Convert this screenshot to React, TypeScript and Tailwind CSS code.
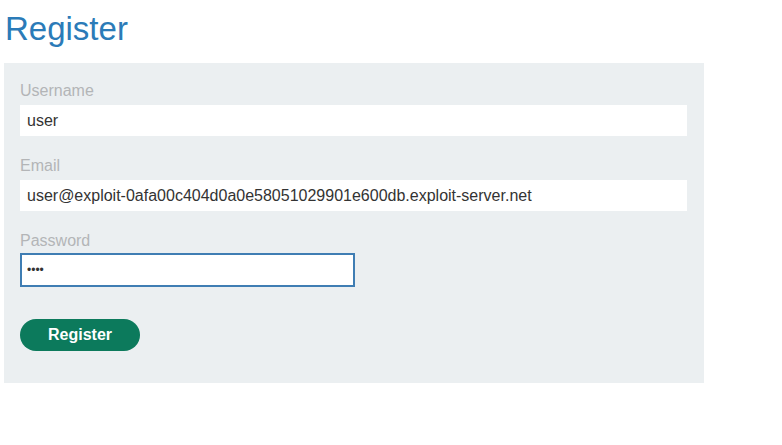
export default function App() {
  return (
    <div className="min-h-screen bg-white font-['Liberation_Sans',Arial,sans-serif]">
      <div className="w-[704px] pl-[4px]">
        <h1 className="pl-[1px] pt-[9px] text-[33px] leading-[40px] text-[#2b7bb8]">Register</h1>
        <form className="mt-[14px] flex flex-col bg-[#ebeff1] px-4 pb-[32px] pt-[18px]">
          <label className="text-[16px] leading-[20px] text-[#b3b5b7]">Username</label>
          <input
            className="mt-[4px] h-[31px] w-[667px] bg-white px-[7px] text-[16px] text-[#333] outline-none"
            defaultValue="user"
          />
          <label className="mt-[20px] text-[16px] leading-[20px] text-[#b3b5b7]">Email</label>
          <input
            className="mt-[4px] h-[31px] w-[667px] bg-white px-[7px] text-[16px] text-[#333] outline-none"
            defaultValue="user@exploit-0afa00c404d0a0e58051029901e600db.exploit-server.net"
          />
          <label className="mt-[20px] text-[16px] leading-[20px] text-[#b3b5b7]">Password</label>
          <input
            type="password"
            className="mt-[2px] h-[34px] w-[335px] border-2 border-[#3f7db3] bg-white px-[5px] text-[12px] text-[#333] outline-none"
            defaultValue="user"
          />
          <button
            type="button"
            className="mt-[32px] h-[32px] w-[120px] rounded-full bg-[#0c7a5c] text-[16px] font-bold text-white"
          >
            Register
          </button>
        </form>
      </div>
    </div>
  );
}
